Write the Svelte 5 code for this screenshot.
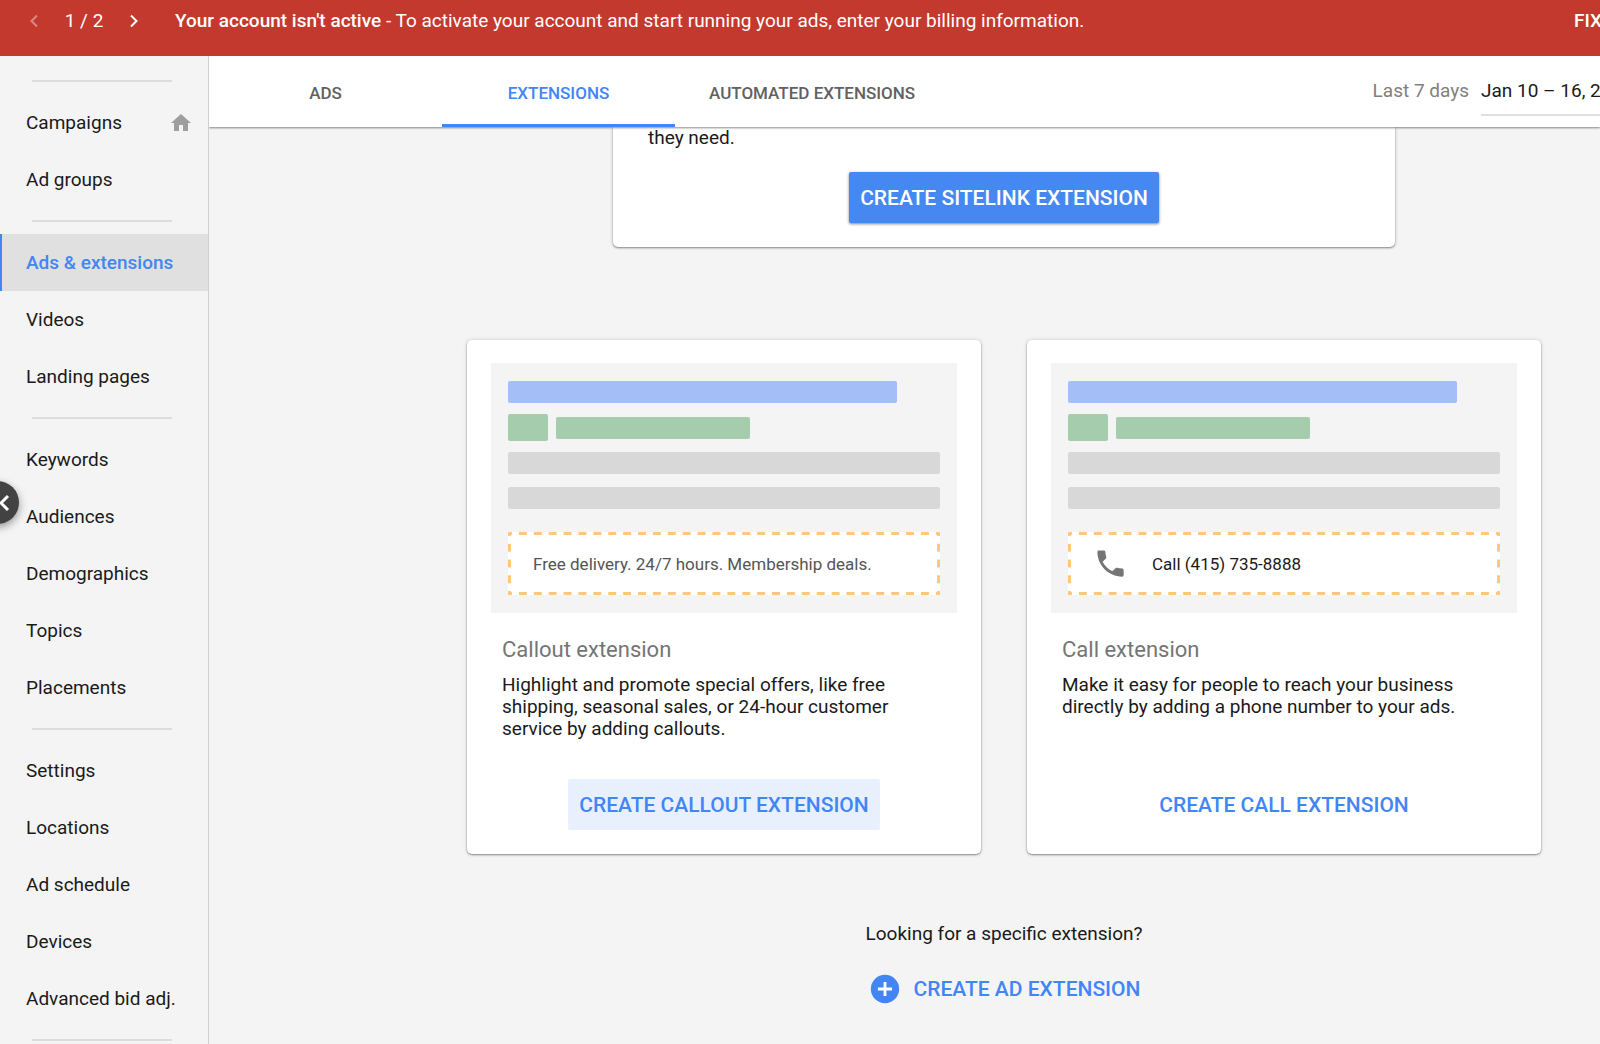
<script lang="ts">
    let navGroups = [
        ["Campaigns", "Ad groups"],
        ["Ads & extensions", "Videos", "Landing pages"],
        ["Keywords", "Audiences", "Demographics", "Topics", "Placements"],
        [
            "Settings",
            "Locations",
            "Ad schedule",
            "Devices",
            "Advanced bid adj.",
        ],
    ];
    let tabs = ["Ads", "Extensions", "Automated extensions"];

    let activeNav = "Ads & extensions";
    let activeTab = "Extensions";

    let cards = [
        {
            kind: "callout",
            title: "Callout extension",
            sample: "Free delivery. 24/7 hours. Membership deals.",
            text: "Highlight and promote special offers, like free shipping, seasonal sales, or 24-hour customer service by adding callouts.",
            action: "Create callout extension",
        },
        {
            kind: "call",
            title: "Call extension",
            sample: "Call (415) 735-8888",
            text: "Make it easy for people to reach your business directly by adding a phone number to your ads.",
            action: "Create call extension",
        },
    ];
</script>

<div class="page">
    <div class="banner">
        <button class="pager" aria-label="Previous notification" disabled>
            <svg width="24" height="24" viewBox="0 0 24 24">
                <path d="M15 6.5 9.5 12l5.5 5.5" />
            </svg>
        </button>
        <span class="count">1 / 2</span>
        <button class="pager" aria-label="Next notification">
            <svg width="24" height="24" viewBox="0 0 24 24">
                <path d="M9 6.5 14.5 12 9 17.5" />
            </svg>
        </button>
        <p>
            <strong>Your account isn't active</strong> - To activate your account
            and start running your ads, enter your billing information.
        </p>
        <button class="fix">FIX</button>
    </div>

    <div class="body">
        <nav class="sidebar">
            {#each navGroups as group}
                <hr />
                {#each group as item}
                    <a
                        href="#top"
                        class:active={item === activeNav}
                        on:click|preventDefault={() => (activeNav = item)}
                    >
                        {item}
                        {#if item === "Campaigns"}
                            <svg width="24" height="24" viewBox="0 0 24 24">
                                <path
                                    fill="#9e9e9e"
                                    d="M10 20v-6h4v6h5v-8h3L12 3 2 12h3v8z"
                                />
                            </svg>
                        {/if}
                    </a>
                {/each}
            {/each}
            <hr />
        </nav>

        <main>
            <header>
                <div class="tabs">
                    {#each tabs as tab}
                        <button
                            class="tab"
                            class:active={tab === activeTab}
                            on:click={() => (activeTab = tab)}>{tab}</button
                        >
                    {/each}
                </div>
                <span class="range-label">Last 7 days</span>
                <button class="range">Jan 10 – 16, 2</button>
            </header>

            <div class="content">
                <section class="card sitelink">
                    <p>they need.</p>
                    <button class="btn filled">Create sitelink extension</button>
                </section>

                <div class="cards">
                    {#each cards as card}
                        <section class="card">
                            <div class="preview">
                                <div class="bar headline"></div>
                                <div class="url">
                                    <div class="badge"></div>
                                    <div class="bar link"></div>
                                </div>
                                <div class="bar line"></div>
                                <div class="bar line"></div>
                                <div class="sample {card.kind}">
                                    {#if card.kind === "call"}
                                        <svg
                                            width="35"
                                            height="35"
                                            viewBox="0 0 24 24"
                                        >
                                            <path
                                                fill="#757575"
                                                d="M6.62 10.79c1.44 2.83 3.76 5.14 6.59 6.59l2.2-2.2c.27-.27.67-.36 1.02-.24 1.12.37 2.33.57 3.57.57.55 0 1 .45 1 1V20c0 .55-.45 1-1 1-9.39 0-17-7.61-17-17 0-.55.45-1 1-1h3.5c.55 0 1 .45 1 1 0 1.25.2 2.45.57 3.57.11.35.03.74-.25 1.02l-2.2 2.2z"
                                            />
                                        </svg>
                                    {/if}
                                    <span>{card.sample}</span>
                                </div>
                            </div>
                            <div class="info">
                                <h2>{card.title}</h2>
                                <p>{card.text}</p>
                            </div>
                            <button
                                class="btn"
                                class:tinted={card.kind === "callout"}
                                >{card.action}</button
                            >
                        </section>
                    {/each}
                </div>

                <div class="more">
                    <p>Looking for a specific extension?</p>
                    <button class="add">
                        <svg width="34" height="34" viewBox="0 0 24 24">
                            <circle cx="12" cy="12" r="10" fill="#4285f4" />
                            <path
                                d="M12 7v10M7 12h10"
                                stroke="#fff"
                                stroke-width="2"
                            />
                        </svg>
                        Create ad extension
                    </button>
                </div>
            </div>
        </main>
    </div>

    <button class="collapse" aria-label="Collapse menu">
        <svg width="32" height="32" viewBox="0 0 32 32">
            <path d="M21 9l-7 7 7 7" />
        </svg>
    </button>
</div>

<style>
    :global(body) {
        background: #f4f4f4;
    }

    .page {
        display: flex;
        flex-direction: column;
        height: 100vh;
        overflow: hidden;
        position: relative;
        font-family: Roboto, sans-serif;
        font-size: 19px;
        line-height: 22px;
        color: #1a1a1a;
        background: #f4f4f4;
    }

    button {
        font: inherit;
        color: inherit;
        background: none;
        border: none;
        padding: 0;
        cursor: pointer;
        white-space: nowrap;
    }

    p,
    h2 {
        margin: 0;
    }

    .banner {
        display: flex;
        align-items: center;
        flex: none;
        height: 42px;
        padding: 0 0 14px 22px;
        background: #c3392e;
        color: #fff;
        overflow: hidden;
    }

    .banner p {
        flex: 1;
        padding-left: 29px;
        white-space: nowrap;
    }

    .banner strong,
    .fix {
        font-weight: 500;
    }

    .count {
        width: 76px;
        text-align: center;
    }

    .pager {
        display: flex;
    }

    .pager path {
        fill: none;
        stroke: #fff;
        stroke-width: 2;
    }

    .pager:disabled {
        opacity: 0.4;
    }

    .fix {
        width: 26px;
        text-align: left;
    }

    .body {
        display: flex;
        flex: 1;
        min-height: 0;
    }

    .sidebar {
        flex: none;
        box-sizing: border-box;
        width: 209px;
        padding-top: 12px;
        border-right: 1px solid #cfcfcf;
        overflow: hidden;
    }

    .sidebar hr {
        height: 2px;
        margin: 12px 36px 12px 32px;
        border: none;
        background: #dcdcdc;
    }

    .sidebar a {
        display: flex;
        align-items: center;
        justify-content: space-between;
        height: 57px;
        padding: 0 15px 0 26px;
        color: #1a1a1a;
        text-decoration: none;
        white-space: nowrap;
    }

    .sidebar a.active {
        background: #e0e0e0;
        box-shadow: inset 2px 0 #4285f4;
        color: #4285f4;
        font-weight: 500;
    }

    main {
        flex: 1;
        min-width: 0;
        overflow: hidden;
    }

    header {
        display: flex;
        align-items: center;
        position: relative;
        height: 71px;
        background: #fff;
        box-shadow: 0 1px 2px rgba(0, 0, 0, 0.45);
    }

    .tabs {
        display: flex;
        align-self: stretch;
        margin-right: auto;
    }

    .tab {
        min-width: 233px;
        padding: 6px 34px 0;
        border-bottom: 3px solid transparent;
        color: #616161;
        font-size: 17px;
        font-weight: 500;
        text-transform: uppercase;
    }

    .tab.active {
        color: #4285f4;
        border-color: #4285f4;
    }

    .range-label {
        color: #808080;
        padding: 0 12px 2px 0;
    }

    .range {
        width: 119px;
        padding: 12px 0;
        border-bottom: 2px solid #e0e0e0;
        overflow: hidden;
        text-align: left;
    }

    .content {
        padding: 0 59px 0 258px;
    }

    .card {
        display: flex;
        flex-direction: column;
        align-items: center;
        padding: 23px 24px 24px;
        border-radius: 5px;
        background: #fff;
        box-shadow:
            0 1px 2px rgba(0, 0, 0, 0.4),
            0 0 4px rgba(0, 0, 0, 0.15);
    }

    .sitelink {
        margin: 0 146px;
        padding: 0 35px 24px;
        border-radius: 0 0 5px 5px;
    }

    .sitelink p {
        align-self: stretch;
        margin-bottom: 23px;
    }

    .btn {
        height: 51px;
        padding: 0 11px;
        border-radius: 2px;
        color: #4285f4;
        font-size: 21px;
        font-weight: 500;
        text-transform: uppercase;
    }

    .filled {
        background: #4688f1;
        color: #fff;
        box-shadow: 0 1px 3px rgba(0, 0, 0, 0.5);
    }

    .tinted {
        background: #e9f0fd;
    }

    .cards {
        display: grid;
        grid-template-columns: 1fr 1fr;
        gap: 46px;
        margin-top: 93px;
    }

    .preview {
        align-self: stretch;
        padding: 18px 17px;
        background: #f4f4f4;
    }

    .bar {
        height: 22px;
        border-radius: 2px;
    }

    .headline {
        width: 90%;
        background: #a4bef8;
    }

    .url {
        display: flex;
        align-items: center;
        gap: 8px;
        margin: 11px 0;
    }

    .badge {
        width: 40px;
        height: 27px;
        border-radius: 2px;
        background: #a5ccad;
    }

    .link {
        width: 45%;
        background: #a5ccad;
    }

    .line {
        margin-bottom: 13px;
        background: #d8d8d8;
    }

    .sample {
        --dash-x: linear-gradient(90deg, #fec77c 25%, #fff 25% 75%, #fec77c 75%);
        --dash-y: linear-gradient(#fec77c 25%, #fff 25% 75%, #fec77c 75%);
        display: flex;
        align-items: center;
        height: 63px;
        margin-top: 23px;
        padding-left: 25px;
        background:
            var(--dash-x) 0 0 / 15px 3px round no-repeat,
            var(--dash-x) 0 100% / 15px 3px round no-repeat,
            var(--dash-y) 0 0 / 3px 16px no-repeat round,
            var(--dash-y) 100% 0 / 3px 16px no-repeat round,
            #fff;
        color: #555;
        font-size: 17px;
    }

    .sample.call {
        gap: 24px;
        color: #1a1a1a;
    }

    .info {
        align-self: stretch;
        min-height: 140px;
        padding: 26px 11px 0;
    }

    .info h2 {
        margin-bottom: 13px;
        color: #757575;
        font-size: 22px;
        font-weight: 400;
    }

    .info p {
        max-width: 400px;
    }

    .more {
        display: flex;
        flex-direction: column;
        align-items: center;
        gap: 27px;
        padding-top: 69px;
    }

    .add {
        display: flex;
        align-items: center;
        gap: 12px;
        color: #4285f4;
        font-size: 21px;
        font-weight: 500;
        text-transform: uppercase;
    }

    /* sits half outside the window, over the menu */
    .collapse {
        display: flex;
        align-items: center;
        justify-content: flex-end;
        position: absolute;
        top: 481px;
        left: -24px;
        width: 43px;
        height: 43px;
        border-radius: 50%;
        background: #424242;
        box-shadow: 0 3px 8px rgba(0, 0, 0, 0.4);
    }

    .collapse path {
        fill: none;
        stroke: #fff;
        stroke-width: 3;
    }
</style>
